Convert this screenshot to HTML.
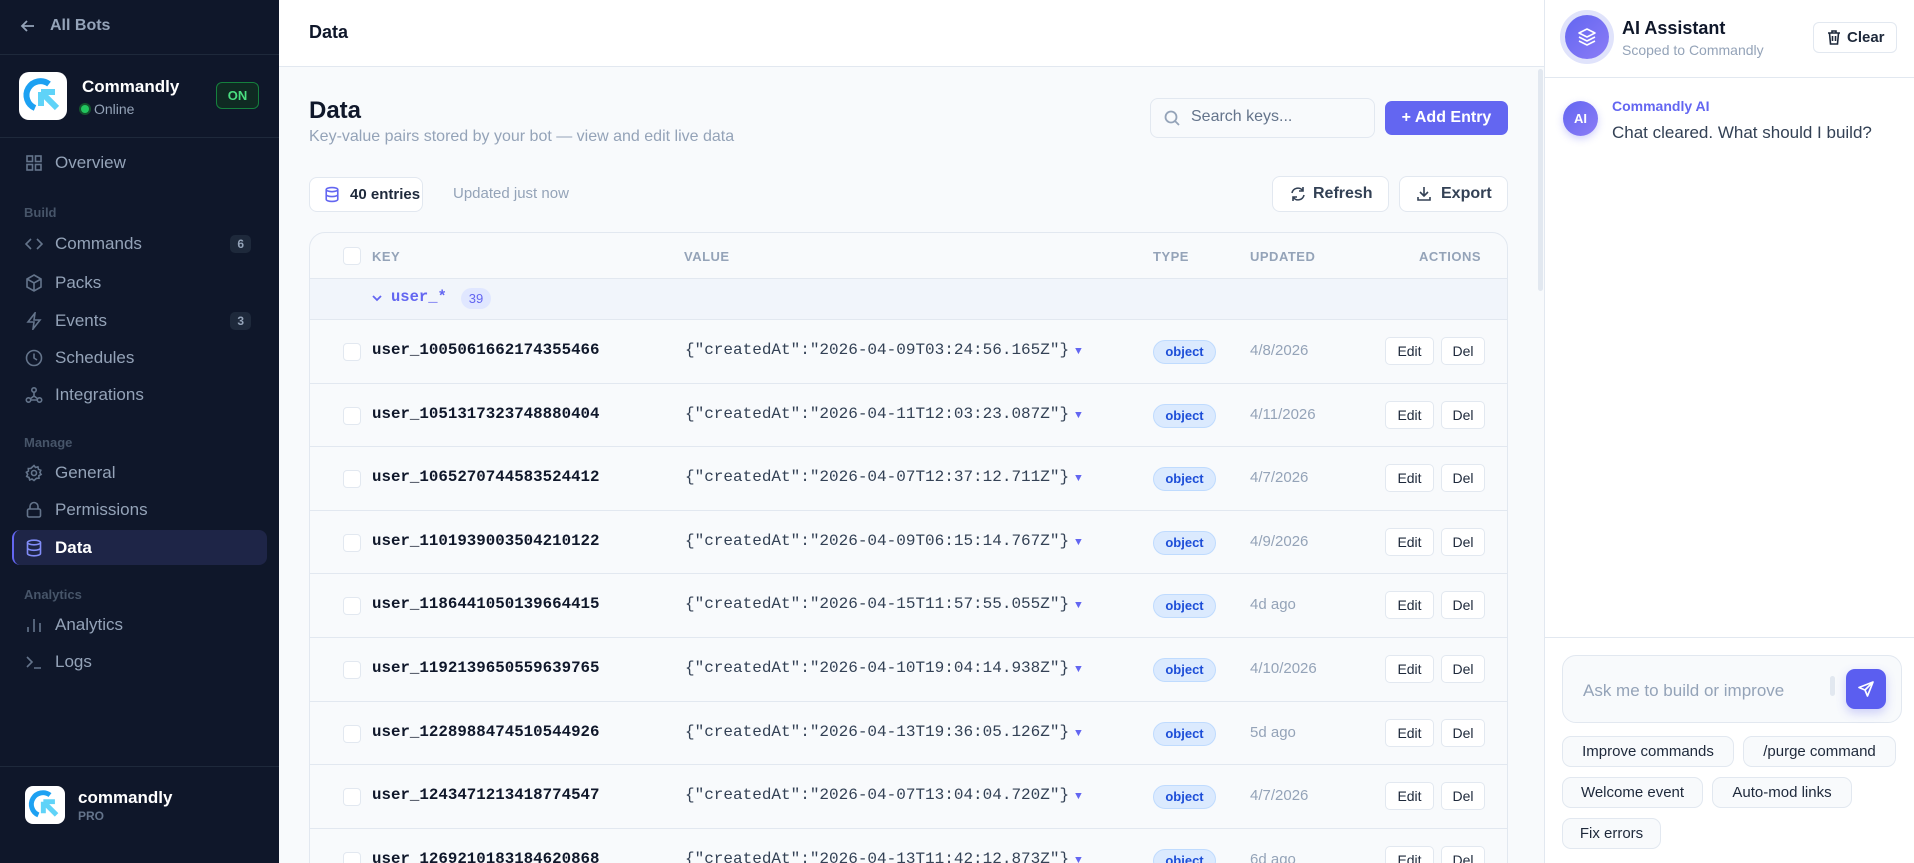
<!DOCTYPE html>
<html><head><meta charset="utf-8"><style>
*{box-sizing:border-box;margin:0;padding:0}
html{width:1914px;height:863px;overflow:hidden}
body{width:1914px;height:863px;overflow:hidden;font-family:"Liberation Sans",sans-serif;background:#f8fafc;position:relative}
.a{position:absolute}
.sb{left:0;top:0;width:279px;height:863px;background:#0f172a}
.nav{position:absolute;left:25px;font-size:17px;color:#94a3b8;display:flex;align-items:center;height:24px;width:240px}
.nav svg{width:18px;height:18px;margin-right:12px;stroke:#64748b;fill:none;stroke-width:1.6}
.nav .b{position:absolute;right:14px;background:#1e293b;color:#94a3b8;font-size:12px;font-weight:bold;border-radius:5px;padding:2px 7px}
.lbl{position:absolute;left:24px;font-size:13px;color:#475569;font-weight:bold}
.mono{font-family:"Liberation Mono",monospace}
.row{position:absolute;left:0;width:1197px;height:64px;border-top:1px solid #e2e8f0}
.cb{position:absolute;left:33px;width:18px;height:18px;border:1px solid #e2e8f0;border-radius:4px;background:#fff;top:23px}
.key{position:absolute;left:62px;top:21px;font-size:15.8px;font-weight:bold;color:#0f172a}
.val{position:absolute;left:375px;top:21px;font-size:16px;color:#334155}
.val span{color:#6366f1;font-size:11px;margin-left:6px}
.badge{position:absolute;left:843px;top:20px;width:63px;height:24px;border-radius:12px;background:#dbeafe;border:1px solid #bfdbfe;color:#1d4ed8;font-size:13px;font-weight:bold;text-align:center;line-height:22px}
.dt{position:absolute;left:940px;top:22px;font-size:15px;color:#94a3b8}
.btn{position:absolute;top:17px;height:28px;border:1px solid #e2e8f0;border-radius:5px;background:#fff;font-size:14px;color:#1e293b;text-align:center;line-height:26px}
.chip{position:absolute;height:31px;border:1px solid #e2e8f0;border-radius:9px;background:#f8fafc;font-size:15px;color:#1e293b;line-height:29px;text-align:center}
</style></head><body>
<div class="a sb">
 <div class="a" style="left:20px;top:17px;color:#94a3b8;font-size:16px;font-weight:bold;display:flex;align-items:center"><svg width="16" height="16" viewBox="0 0 16 16" style="margin-right:14px" fill="none" stroke="#94a3b8" stroke-width="1.8"><path d="M14 8H2M7 3L2 8l5 5"/></svg>All Bots</div>
 <div class="a" style="left:0;top:54px;width:279px;height:1px;background:#1e293b"></div>
 <div class="a" style="left:19px;top:72px;width:48px;height:48px;background:#fff;border-radius:10px"><svg width="48" height="48" viewBox="0 0 48 48"><path d="M30 12A14 14 0 1 0 16 36" stroke="#1da1f2" stroke-width="6" fill="none"/><path d="M22 20l14 0M22 20l0 14M22 20l16 16" stroke="#5fd3f8" stroke-width="6" fill="none"/></svg></div>
 <div class="a" style="left:82px;top:77px;color:#fff;font-size:17px;font-weight:bold">Commandly</div>
 <div class="a" style="left:81px;top:101px;color:#94a3b8;font-size:14px;display:flex;align-items:center"><span style="width:8px;height:8px;border-radius:50%;background:#22c55e;box-shadow:0 0 0 2px #14532d;margin-right:5px"></span>Online</div>
 <div class="a" style="left:216px;top:82px;width:43px;height:27px;border:1px solid #15803d;border-radius:6px;background:#0f2a22;color:#4ade80;font-size:13px;font-weight:bold;text-align:center;line-height:25px">ON</div>
 <div class="a" style="left:0;top:137px;width:279px;height:1px;background:#1e293b"></div>
 <div class="nav" style="top:151px"><svg viewBox="0 0 18 18"><rect x="2" y="2" width="5.5" height="5.5"/><rect x="10.5" y="2" width="5.5" height="5.5"/><rect x="2" y="10.5" width="5.5" height="5.5"/><rect x="10.5" y="10.5" width="5.5" height="5.5"/></svg>Overview</div>
 <div class="lbl" style="top:205px">Build</div>
 <div class="nav" style="top:232px"><svg viewBox="0 0 18 18"><path d="M6 4L1 9l5 5M12 4l5 5-5 5"/></svg>Commands<span class="b">6</span></div>
 <div class="nav" style="top:271px"><svg viewBox="0 0 18 18"><path d="M9 1l7 4v8l-7 4-7-4V5zM2 5l7 4 7-4M9 9v8"/></svg>Packs</div>
 <div class="nav" style="top:309px"><svg viewBox="0 0 18 18"><path d="M10 1L3 10h6l-1 7 7-9H9z"/></svg>Events<span class="b">3</span></div>
 <div class="nav" style="top:346px"><svg viewBox="0 0 18 18"><circle cx="9" cy="9" r="7.5"/><path d="M9 4.5V9l3 2"/></svg>Schedules</div>
 <div class="nav" style="top:383px"><svg viewBox="0 0 18 18"><circle cx="9" cy="4" r="2.2"/><circle cx="3.5" cy="14" r="2.2"/><circle cx="14.5" cy="14" r="2.2"/><path d="M9 6v4l-4 3M9 10l4 3M6 14h6"/></svg>Integrations</div>
 <div class="lbl" style="top:435px">Manage</div>
 <div class="nav" style="top:461px"><svg viewBox="0 0 18 18"><circle cx="9" cy="9" r="2.5"/><path d="M9 1.5l1.5 2 2.4-.6.6 2.4 2.3 1-.9 2.2 1.2 2-2.2 1.2.1 2.5-2.5.1L9 16.5l-2-1.5-2.3.9-.7-2.4-2.3-1 1-2.3-1.3-2L3.4 7l-.1-2.5 2.5-.1z"/></svg>General</div>
 <div class="nav" style="top:498px"><svg viewBox="0 0 18 18"><rect x="2.5" y="8" width="13" height="8" rx="1.5"/><path d="M5 8V5.5a4 4 0 0 1 8 0V8"/></svg>Permissions</div>
 <div class="a" style="left:12px;top:530px;width:255px;height:35px;background:#1e2547;border-radius:8px;border-left:2px solid #6366f1"></div>
 <div class="nav" style="top:536px;color:#fff;font-weight:bold"><svg viewBox="0 0 18 18" style="stroke:#818cf8"><ellipse cx="9" cy="3.5" rx="6.5" ry="2.3"/><path d="M2.5 3.5v11c0 1.3 2.9 2.300 6.5 2.3s6.5-1 6.5-2.3v-11M2.5 9c0 1.3 2.9 2.3 6.5 2.3s6.5-1 6.5-2.3"/></svg>Data</div>
 <div class="lbl" style="top:587px">Analytics</div>
 <div class="nav" style="top:613px"><svg viewBox="0 0 18 18"><path d="M3 16v-5M9 16V3M15 16V7"/></svg>Analytics</div>
 <div class="nav" style="top:650px"><svg viewBox="0 0 18 18"><path d="M2 4l5 5-5 5M9 15h7"/></svg>Logs</div>
 <div class="a" style="left:0;top:766px;width:279px;height:1px;background:#1e293b"></div>
 <div class="a" style="left:25px;top:786px;width:40px;height:38px;background:#fff;border-radius:8px"><svg width="40" height="38" viewBox="0 0 48 46"><path d="M30 11A14 14 0 1 0 16 35" stroke="#1da1f2" stroke-width="6" fill="none"/><path d="M22 19l14 0M22 19l0 14M22 19l16 16" stroke="#5fd3f8" stroke-width="6" fill="none"/></svg></div>
 <div class="a" style="left:78px;top:788px;color:#fff;font-size:17px;font-weight:bold">commandly</div>
 <div class="a" style="left:78px;top:809px;color:#64748b;font-size:12px;font-weight:bold">PRO</div>
</div>

<div class="a" style="left:279px;top:0;width:1265px;height:67px;background:#fff;border-bottom:1px solid #e2e8f0"></div>
<div class="a" style="left:309px;top:22px;font-size:18px;font-weight:bold;color:#0f172a">Data</div>
<div class="a" style="left:1538px;top:69px;width:5px;height:222px;background:#e2e8f0;border-radius:3px"></div>

<div class="a" style="left:309px;top:97px;font-size:24px;font-weight:bold;color:#0f172a">Data</div>
<div class="a" style="left:309px;top:128px;font-size:16px;color:#94a3b8">Key-value pairs stored by your bot — view and edit live data</div>
<div class="a" style="left:1150px;top:98px;width:225px;height:40px;border:1px solid #e2e8f0;border-radius:8px;background:#f8fafc"></div>
<svg class="a" style="left:1163px;top:109px" width="18" height="18" viewBox="0 0 18 18" fill="none" stroke="#94a3b8" stroke-width="1.8"><circle cx="8" cy="8" r="5.5"/><path d="M12 12l4 4"/></svg>
<div class="a" style="left:1191px;top:108px;font-size:16px;color:#64748b">Search keys...</div>
<div class="a" style="left:1385px;top:101px;width:123px;height:34px;background:#6366f1;border-radius:7px;color:#fff;font-size:16px;font-weight:bold;text-align:center;line-height:34px">+ Add Entry</div>

<div class="a" style="left:309px;top:177px;width:114px;height:35px;border:1px solid #e2e8f0;border-radius:8px;background:#fff"></div>
<svg class="a" style="left:324px;top:186px" width="16" height="17" viewBox="0 0 18 18" fill="none" stroke="#6366f1" stroke-width="1.8"><ellipse cx="9" cy="3.5" rx="6.5" ry="2.3"/><path d="M2.5 3.5v11c0 1.3 2.9 2.3 6.5 2.3s6.5-1 6.5-2.3v-11M2.5 9c0 1.3 2.9 2.3 6.5 2.3s6.5-1 6.5-2.3"/></svg>
<div class="a" style="left:350px;top:186px;font-size:15px;color:#1e293b;font-weight:bold">40 entries</div>
<div class="a" style="left:453px;top:185px;font-size:15px;color:#94a3b8">Updated just now</div>
<div class="a" style="left:1272px;top:176px;width:117px;height:36px;border:1px solid #e2e8f0;border-radius:8px;background:#fff;font-size:16px;font-weight:bold;color:#334155;line-height:34px;padding-left:40px">Refresh</div>
<svg class="a" style="left:1290px;top:186px" width="16" height="16" viewBox="0 0 16 16" fill="none" stroke="#334155" stroke-width="1.6"><path d="M2 7a6 6 0 0 1 11-2M14 9a6 6 0 0 1-11 2M13 1v4H9M3 15v-4h4"/></svg>
<div class="a" style="left:1399px;top:176px;width:109px;height:36px;border:1px solid #e2e8f0;border-radius:8px;background:#fff;font-size:16px;font-weight:bold;color:#334155;line-height:34px;padding-left:41px">Export</div>
<svg class="a" style="left:1416px;top:186px" width="16" height="16" viewBox="0 0 16 16" fill="none" stroke="#334155" stroke-width="1.6"><path d="M8 1v9M4 6l4 4 4-4M2 11v3h12v-3"/></svg>

<div class="a" style="left:309px;top:232px;width:1199px;height:660px;border:1px solid #e2e8f0;border-radius:16px;background:#f8fafc;overflow:hidden">
<div class="a" style="left:33px;top:14px;width:18px;height:18px;border:1px solid #e2e8f0;border-radius:4px;background:#fff"></div>
<div class="a" style="left:62px;top:16px;font-size:13px;font-weight:bold;color:#94a3b8;letter-spacing:.5px">KEY</div>
<div class="a" style="left:374px;top:16px;font-size:13px;font-weight:bold;color:#94a3b8;letter-spacing:.5px">VALUE</div>
<div class="a" style="left:843px;top:16px;font-size:13px;font-weight:bold;color:#94a3b8;letter-spacing:.5px">TYPE</div>
<div class="a" style="left:940px;top:16px;font-size:13px;font-weight:bold;color:#94a3b8;letter-spacing:.5px">UPDATED</div>
<div class="a" style="left:1109px;top:16px;font-size:13px;font-weight:bold;color:#94a3b8;letter-spacing:.5px">ACTIONS</div>
<div class="a" style="left:0;top:45px;width:1197px;height:41px;background:#f1f5fb;border-top:1px solid #e2e8f0"></div>
<svg class="a" style="left:62px;top:61px" width="10" height="8" viewBox="0 0 10 8" fill="none" stroke="#6366f1" stroke-width="1.8"><path d="M1 2l4 4 4-4"/></svg>
<div class="a mono" style="left:81px;top:55px;font-size:15.5px;font-weight:bold;color:#6366f1">user_*</div>
<div class="a" style="left:151px;top:55px;width:30px;height:21px;border-radius:11px;background:#e0e7ff;color:#6366f1;font-size:13px;text-align:center;line-height:21px">39</div>

<div class="row" style="top:86px"><div class="cb"></div><div class="key mono">user_1005061662174355466</div><div class="val mono">{"createdAt":"2026-04-09T03:24:56.165Z"}<span>▼</span></div><div class="badge">object</div><div class="dt">4/8/2026</div><div class="btn" style="left:1075px;width:49px">Edit</div><div class="btn" style="left:1131px;width:44px">Del</div></div>
<div class="row" style="top:150px"><div class="cb"></div><div class="key mono">user_1051317323748880404</div><div class="val mono">{"createdAt":"2026-04-11T12:03:23.087Z"}<span>▼</span></div><div class="badge">object</div><div class="dt">4/11/2026</div><div class="btn" style="left:1075px;width:49px">Edit</div><div class="btn" style="left:1131px;width:44px">Del</div></div>
<div class="row" style="top:213px"><div class="cb"></div><div class="key mono">user_1065270744583524412</div><div class="val mono">{"createdAt":"2026-04-07T12:37:12.711Z"}<span>▼</span></div><div class="badge">object</div><div class="dt">4/7/2026</div><div class="btn" style="left:1075px;width:49px">Edit</div><div class="btn" style="left:1131px;width:44px">Del</div></div>
<div class="row" style="top:277px"><div class="cb"></div><div class="key mono">user_1101939003504210122</div><div class="val mono">{"createdAt":"2026-04-09T06:15:14.767Z"}<span>▼</span></div><div class="badge">object</div><div class="dt">4/9/2026</div><div class="btn" style="left:1075px;width:49px">Edit</div><div class="btn" style="left:1131px;width:44px">Del</div></div>
<div class="row" style="top:340px"><div class="cb"></div><div class="key mono">user_1186441050139664415</div><div class="val mono">{"createdAt":"2026-04-15T11:57:55.055Z"}<span>▼</span></div><div class="badge">object</div><div class="dt">4d ago</div><div class="btn" style="left:1075px;width:49px">Edit</div><div class="btn" style="left:1131px;width:44px">Del</div></div>
<div class="row" style="top:404px"><div class="cb"></div><div class="key mono">user_1192139650559639765</div><div class="val mono">{"createdAt":"2026-04-10T19:04:14.938Z"}<span>▼</span></div><div class="badge">object</div><div class="dt">4/10/2026</div><div class="btn" style="left:1075px;width:49px">Edit</div><div class="btn" style="left:1131px;width:44px">Del</div></div>
<div class="row" style="top:468px"><div class="cb"></div><div class="key mono">user_1228988474510544926</div><div class="val mono">{"createdAt":"2026-04-13T19:36:05.126Z"}<span>▼</span></div><div class="badge">object</div><div class="dt">5d ago</div><div class="btn" style="left:1075px;width:49px">Edit</div><div class="btn" style="left:1131px;width:44px">Del</div></div>
<div class="row" style="top:531px"><div class="cb"></div><div class="key mono">user_1243471213418774547</div><div class="val mono">{"createdAt":"2026-04-07T13:04:04.720Z"}<span>▼</span></div><div class="badge">object</div><div class="dt">4/7/2026</div><div class="btn" style="left:1075px;width:49px">Edit</div><div class="btn" style="left:1131px;width:44px">Del</div></div>
<div class="row" style="top:595px"><div class="cb"></div><div class="key mono">user_1269210183184620868</div><div class="val mono">{"createdAt":"2026-04-13T11:42:12.873Z"}<span>▼</span></div><div class="badge">object</div><div class="dt">6d ago</div><div class="btn" style="left:1075px;width:49px">Edit</div><div class="btn" style="left:1131px;width:44px">Del</div></div>
</div>

<div class="a" style="left:1544px;top:0;width:370px;height:863px;background:#fff;border-left:1px solid #e2e8f0"></div>
<div class="a" style="left:1544px;top:77px;width:370px;height:1px;background:#e2e8f0"></div>
<div class="a" style="left:1565px;top:15px;width:44px;height:44px;border-radius:50%;background:linear-gradient(135deg,#6366f1,#8b7cf6);box-shadow:0 0 0 5px #e0e3fb"></div>
<svg class="a" style="left:1577px;top:27px" width="20" height="20" viewBox="0 0 20 20" fill="none" stroke="#fff" stroke-width="1.6" stroke-linejoin="round"><path d="M10 2l8 4-8 4-8-4zM2 10l8 4 8-4M2 14l8 4 8-4"/></svg>
<div class="a" style="left:1622px;top:18px;font-size:18px;font-weight:bold;color:#0f172a">AI Assistant</div>
<div class="a" style="left:1622px;top:42px;font-size:14px;color:#94a3b8">Scoped to Commandly</div>
<div class="a" style="left:1813px;top:22px;width:84px;height:31px;border:1px solid #e2e8f0;border-radius:6px;font-size:15px;font-weight:bold;color:#1e293b;line-height:29px;padding-left:33px">Clear</div>
<svg class="a" style="left:1827px;top:30px" width="14" height="15" viewBox="0 0 14 15" fill="none" stroke="#1e293b" stroke-width="1.6"><path d="M1 3h12M5 3V1h4v2M2.5 3l1 11h7l1-11M5.5 6v5M8.5 6v5"/></svg>
<div class="a" style="left:1563px;top:101px;width:35px;height:35px;border-radius:50%;background:linear-gradient(135deg,#6366f1,#8b7cf6);color:#fff;font-size:13px;font-weight:bold;text-align:center;line-height:35px;box-shadow:0 3px 8px rgba(99,102,241,.3)">AI</div>
<div class="a" style="left:1612px;top:98px;font-size:14px;font-weight:bold;color:#6366f1">Commandly AI</div>
<div class="a" style="left:1612px;top:123px;font-size:17px;color:#334155">Chat cleared. What should I build?</div>
<div class="a" style="left:1544px;top:637px;width:370px;height:1px;background:#e2e8f0"></div>
<div class="a" style="left:1562px;top:655px;width:340px;height:68px;border:1px solid #e2e8f0;border-radius:14px;background:#f8fafc"></div>
<div class="a" style="left:1583px;top:681px;font-size:17px;color:#94a3b8">Ask me to build or improve</div>
<div class="a" style="left:1830px;top:676px;width:5px;height:20px;border-radius:3px;background:#e2e8f0"></div>
<div class="a" style="left:1846px;top:669px;width:40px;height:40px;border-radius:9px;background:#5b5ef0;box-shadow:0 4px 10px rgba(99,102,241,.3)"></div>
<svg class="a" style="left:1857px;top:680px" width="18" height="18" viewBox="0 0 18 18" fill="none" stroke="#fff" stroke-width="1.7" stroke-linejoin="round"><path d="M16 2L2 7.5l6 2.5 2.5 6zM16 2L8 10"/></svg>
<div class="chip" style="left:1562px;top:736px;width:172px">Improve commands</div>
<div class="chip" style="left:1743px;top:736px;width:153px">/purge command</div>
<div class="chip" style="left:1562px;top:777px;width:141px">Welcome event</div>
<div class="chip" style="left:1712px;top:777px;width:140px">Auto-mod links</div>
<div class="chip" style="left:1562px;top:818px;width:99px">Fix errors</div>
</body></html>
